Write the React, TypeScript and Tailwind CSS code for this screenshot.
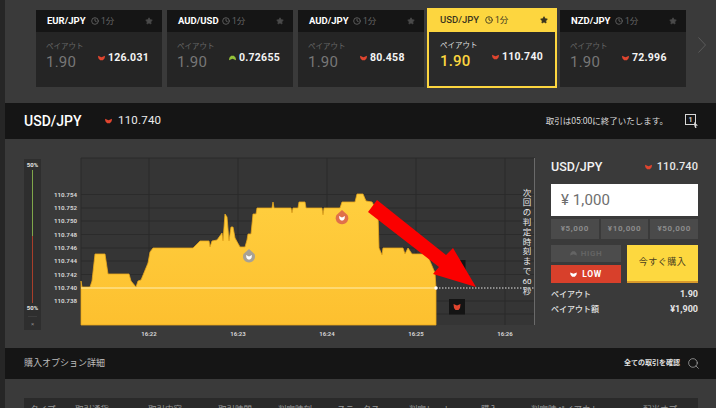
import React from "react";
import { Clock, Star, Search } from "lucide-react";

const FONT = 'Roboto, "Noto Sans CJK JP", sans-serif';

function Down({ className = "" }: { className?: string }) {
  return (
    <svg viewBox="0 0 8 6" className={className} fill="#e0452f">
      <path d="M0 .5 L4 2.2 L8 .5 L7.6 3.4 L5.6 5.6 L2.4 5.6 L.4 3.4 Z" />
    </svg>
  );
}
function Up({ className = "" }: { className?: string }) {
  return (
    <svg viewBox="0 0 8 6" className={className} fill="#94c23a">
      <path d="M0 5.5 L4 3.8 L8 5.5 L7.6 2.6 L5.6 .4 L2.4 .4 L.4 2.6 Z" />
    </svg>
  );
}

const cards = [
  { pair: "EUR/JPY", price: "126.031", up: false },
  { pair: "AUD/USD", price: "0.72655", up: true },
  { pair: "AUD/JPY", price: "80.458", up: false },
  { pair: "USD/JPY", price: "110.740", up: false, active: true },
  { pair: "NZD/JPY", price: "72.996", up: false },
];

function Card({ pair, price, up, active }: { pair: string; price: string; up: boolean; active?: boolean }) {
  return (
    <div
      className={
        active
          ? "-mx-[2px] -mt-[2px] flex h-[80px] w-[130px] shrink-0 flex-col bg-[#fdd63f]"
          : "flex h-[77px] w-[126px] shrink-0 flex-col bg-[#252525]"
      }
    >
      <div
        className={
          active
            ? "flex h-[24px] shrink-0 items-center pl-[13px] pr-[9px] text-[#3a3520]"
            : "flex h-[22px] shrink-0 items-center bg-[#151515] pl-[11px] pr-[9px] text-white"
        }
      >
        <span className={active ? "w-[45px] text-[9.5px] font-medium" : "w-[44px] text-[9.5px] font-bold"}>{pair}</span>
        <Clock className={active ? "size-[8px] text-[#3a3520]" : "size-[8px] text-[#666]"} strokeWidth={2.5} />
        <span className={active ? "ml-[2px] text-[8.5px]" : "ml-[2px] text-[8.5px] text-[#666]"}>1分</span>
        <Star
          className={active ? "ml-auto size-[8px] text-[#3a3520]" : "ml-auto size-[8px] text-[#4a4a4a]"}
          fill="currentColor"
        />
      </div>
      <div
        className={
          active
            ? "mx-[2px] mb-[2px] flex flex-1 bg-[#2a2a2a] pl-[11px] pt-[8px]"
            : "flex flex-1 pl-[10px] pt-[9px]"
        }
      >
        <div className="flex w-[52px] shrink-0 flex-col">
          <span
            className={
              active
                ? "whitespace-nowrap text-[7.5px] leading-[11px] text-[#ddd]"
                : "whitespace-nowrap text-[7.5px] leading-[11px] text-[#666]"
            }
          >
            ペイアウト
          </span>
          <span
            className={
              active
                ? "mt-[1px] text-[15px] font-medium leading-[18px] tracking-[.2px] text-[#fdd63f]"
                : "mt-[1px] text-[15px] leading-[18px] tracking-[.2px] text-[#777]"
            }
          >
            1.90
          </span>
        </div>
        <div className="flex h-[26px] items-center gap-[3px] self-start pt-[8px]">
          {up ? <Up className="h-[6px] w-[7px]" /> : <Down className="h-[6px] w-[7px]" />}
          <span className="text-[10.5px] font-bold tracking-[.25px] text-[#f4f4f4]">{price}</span>
        </div>
      </div>
    </div>
  );
}

const area =
  "81,325 81,281 82,287 90,287 92,281 95,254 105,254 108,274 129,274 131,281 136,287 138,281 141,280 148,263 150,252 153,248 193,248 200,241 209,241 210,247 212,241 217,240 222,233 223,241 225,214 227,217 229,241 231,227 233,227 235,238 240,247 245,247 247,240 248,234 251,234 253,214 256,214 257,208 272,208 273,202 274,208 291,208 292,213 293,208 298,208 299,202 305,202 306,208 322,208 323,215 324,208 340,208 342,202 355,202 357,194 363,194 366,201 372,202 378,213 379,248 382,255 383,248 403,248 405,254 408,248 412,254 427,254 435,273 436,288 436,325";

const ys = [
  ["110.754", 194.5],
  ["110.752", 208],
  ["110.750", 221],
  ["110.748", 234.5],
  ["110.746", 248],
  ["110.744", 261],
  ["110.742", 274.5],
  ["110.740", 288],
  ["110.738", 301],
] as const;

const xs = [
  ["16:22", 149],
  ["16:23", 238],
  ["16:24", 327],
  ["16:25", 416],
  ["16:26", 505],
] as const;

const vert = ["次", "回", "の", "判", "定", "時", "刻", "ま", "で", "60", "秒"];

function Chart() {
  return (
    <svg viewBox="41 150 504 190" className="h-[190px] w-[504px] shrink-0" style={{ fontFamily: FONT }}>
      <defs>
        <linearGradient id="fill" x1="0" y1="0" x2="0" y2="1">
          <stop offset="0" stopColor="#ffcf3f" />
          <stop offset="1" stopColor="#fdc02f" />
        </linearGradient>
      </defs>
      <rect x="81" y="158" width="454" height="167" fill="#353535" />
      {[158, ...ys.map((v) => v[1]), 314].map((y) => (
        <line key={y} x1="81" x2="535" y1={y} y2={y} stroke="#2b2b2b" strokeWidth="1" />
      ))}
      {[81, ...xs.map((v) => v[1])].map((x) => (
        <line key={x} x1={x} x2={x} y1="158" y2="325" stroke="#2b2b2b" strokeWidth="1" />
      ))}
      <line x1="534.5" x2="534.5" y1="158" y2="325" stroke="#6a6a6a" strokeWidth="1" />
      {ys.map(([t, y]) => (
        <text key={t} x="77" y={y + 2.3} textAnchor="end" fontSize="6.2" fontWeight="700" fill="#d4d4d4">
          {t}
        </text>
      ))}
      {xs.map(([t, x]) => (
        <text key={t} x={x} y="336" textAnchor="middle" fontSize="6" fontWeight="700" fill="#d4d4d4">
          {t}
        </text>
      ))}
      <polygon points={area} fill="url(#fill)" stroke="#e9a71c" strokeWidth=".8" />
      <line x1="81" x2="436" y1="288" y2="288" stroke="#ffeeb0" strokeWidth="1" />
      <line x1="436" x2="535" y1="288" y2="288" stroke="#ededed" strokeWidth="1" strokeDasharray="1.5 1.5" />
      <circle cx="436" cy="288" r="1.7" fill="#fff" />

      <path d="M249 249 L254.5 254 A6 6 0 1 1 243.5 254 Z" fill="#a8a194" />
      <path d="M246 255 L249 256.5 L252 255 L251.5 258 L250 259.5 L248 259.5 L246.5 258 Z" fill="#fff" />
      <path d="M342 210 L347.5 215 A6.3 6.3 0 1 1 336.5 215 Z" fill="#e0704a" />
      <path d="M339 216 L342 217.5 L345 216 L344.5 219 L343 220.5 L341 220.5 L339.5 219 Z" fill="#fff" />

      <rect x="458" y="260" width="7.5" height="12" fill="#141414" />
      <rect x="449" y="299" width="16" height="15.5" fill="#141414" />
      <path d="M453.5 304 L457 305.5 L460.5 304 L460 308 L458.5 310 L455.5 310 L454 308 Z" fill="#e0452f" />

      <polygon points="377,200 446,255 453,248 476,287 433,274 439,267 368,212" fill="#fb0000" />

      {vert.map((c, i) => (
        <text
          key={i}
          x="527"
          y={195.5 + i * 9.8}
          textAnchor="middle"
          fontSize={c === "60" ? 8 : 8.5}
          fill="#ececec"
        >
          {c}
        </text>
      ))}
    </svg>
  );
}

function Gauge() {
  return (
    <div className="mt-[20px] flex h-[171px] w-[17px] shrink-0 flex-col items-center bg-[#2e2e2e] pt-[2px]">
      <span className="text-[6px] font-bold leading-[8px] text-[#e4e4e4]">50%</span>
      <div className="mt-[1px] h-[66px] w-[1px] bg-[#7fa64a]" />
      <div className="h-[67px] w-[1px] bg-[#a83e2a]" />
      <span className="mt-[1px] text-[6px] font-bold leading-[8px] text-[#e4e4e4]">50%</span>
      <div className="mt-[4px] h-[1px] w-[9px] bg-[#3c3c3c]" />
      <span className="mt-[1px] text-[6px] leading-[12px] text-[#888]">×</span>
    </div>
  );
}

function Panel() {
  return (
    <div className="ml-[6px] flex w-[147px] shrink-0 flex-col pt-[18px]">
      <div className="flex h-[20px] items-center">
        <span className="text-[12.5px] font-medium text-[#f2f2f2]">USD/JPY</span>
        <Down className="ml-auto h-[6px] w-[7px]" />
        <span className="ml-[5px] text-[11px] font-medium tracking-[.1px] text-[#e8e8e8]">110.740</span>
      </div>
      <div className="mt-[7px] flex h-[32px] items-center bg-white pl-[10px] pt-[1px] text-[15px] tracking-[.1px] text-[#6e6e6e]">
        ¥ 1,000
      </div>
      <div className="mt-[3px] flex gap-[2px]">
        {["¥5,000", "¥10,000", "¥50,000"].map((t) => (
          <div
            key={t}
            className="flex h-[20px] flex-1 items-center justify-center bg-[#4a4a4a] text-[8px] font-bold tracking-[.6px] text-[#8c8c8c]"
          >
            {t}
          </div>
        ))}
      </div>
      <div className="mt-[6px] flex gap-[6px]">
        <div className="flex w-[70px] flex-col gap-[3px]">
          <div className="flex h-[17px] items-center justify-center gap-[4px] bg-[#4c4c4c] text-[8px] font-bold tracking-[.6px] text-[#646464]">
            <svg viewBox="0 0 8 6" className="h-[5px] w-[7px]" fill="#646464">
              <path d="M0 5.5 L4 3.8 L8 5.5 L7.6 2.6 L5.6 .4 L2.4 .4 L.4 2.6 Z" />
            </svg>
            HIGH
          </div>
          <div className="flex h-[18px] items-center justify-center gap-[5px] bg-[#d8402b] text-[8.5px] font-bold tracking-[.6px] text-white">
            <svg viewBox="0 0 8 6" className="h-[5px] w-[7px]" fill="#fff">
              <path d="M0 .5 L4 2.2 L8 .5 L7.6 3.4 L5.6 5.6 L2.4 5.6 L.4 3.4 Z" />
            </svg>
            LOW
          </div>
        </div>
        <div className="flex h-[38px] flex-1 items-center justify-center border-b-2 border-[#d99a2b] bg-[#fdd83f] text-[9px] tracking-[.5px] text-[#4a4020]">
          今すぐ購入
        </div>
      </div>
      <div className="mt-[5px] flex h-[14px] items-center justify-between text-[8px] font-medium text-[#e4e4e4]">
        <span>ペイアウト</span>
        <span className="text-[9px] font-bold">1.90</span>
      </div>
      <div className="flex h-[15px] items-center justify-between text-[8px] font-medium text-[#e4e4e4]">
        <span>ペイアウト額</span>
        <span className="text-[9px] font-bold">¥1,900</span>
      </div>
    </div>
  );
}

const columns: [string, string][] = [
  ["タイプ", "w-[45px]"],
  ["取引通貨", "w-[73px]"],
  ["取引内容", "w-[70px]"],
  ["取引時間", "w-[60px]"],
  ["判定時刻", "w-[59px]"],
  ["ステータス", "w-[72px]"],
  ["判定レート", "w-[72px]"],
  ["購入", "w-[50px]"],
  ["判定時ペイアウト", "w-[112px]"],
  ["配当オプ", "w-[40px]"],
];

export default function App() {
  return (
    <div className="flex h-[408px] w-[716px] overflow-hidden bg-[#3a3a3a]" style={{ fontFamily: FONT }}>
      <div className="w-[5px] shrink-0 bg-[#262626]" />
      <div className="flex min-w-0 flex-1 flex-col">
        <div className="relative flex h-[98px] shrink-0 items-start gap-[5px] pl-[31px] pt-[10px]">
          {cards.map((c) => (
            <Card key={c.pair} {...c} />
          ))}
          <svg viewBox="0 0 8 16" className="absolute left-[693px] top-[37px] h-[16px] w-[8px]" fill="none" stroke="#5a5a5a">
            <path d="M.5 .5 L7.5 8 L.5 15.5" />
          </svg>
        </div>
        <div className="mt-[5px] flex h-[36px] shrink-0 items-center bg-[#151515] pl-[19px] pr-[18px]">
          <span className="w-[81px] text-[14px] font-medium text-white">USD/JPY</span>
          <Down className="h-[6px] w-[7px]" />
          <span className="ml-[6px] text-[11.5px] tracking-[.2px] text-[#ececec]">110.740</span>
          <span className="ml-auto text-[8.5px] text-[#dcdcdc]">取引は05:00に終了いたします。</span>
          <svg viewBox="0 0 13 14" className="ml-[17px] h-[14px] w-[13px]">
            <rect x=".5" y=".5" width="10" height="10" fill="none" stroke="#d8d8d8" />
            <text x="5.5" y="8" textAnchor="middle" fontSize="7" fontWeight="700" fill="#d8d8d8">
              1
            </text>
            <path d="M9 8 L13 11.5 L11 11.7 L11.5 14 L10.2 14 L9.4 12 Z" fill="#d8d8d8" />
          </svg>
        </div>
        <div className="flex h-[209px] shrink-0 items-start pl-[19px]">
          <Gauge />
          <div className="mt-[11px]">
            <Chart />
          </div>
          <Panel />
        </div>
        <div className="flex h-[31px] shrink-0 items-center bg-[#151515] pl-[19px] pr-[16px]">
          <span className="text-[9px] text-[#bdbdbd]">購入オプション詳細</span>
          <span className="ml-auto text-[7px] font-bold text-[#e0e0e0]">全ての取引を確認</span>
          <Search className="ml-[7px] size-[13px] text-[#bdbdbd]" strokeWidth={1.2} />
        </div>
        <div className="ml-[19px] mr-[18px] mt-[19px] flex h-[30px] shrink-0 items-start bg-[#2a2a2a] pl-[6px] pt-[5px] text-[8.5px] text-[#9a9a9a]">
          {columns.map(([t, w]) => (
            <span key={t} className={`${w} shrink-0 whitespace-nowrap`}>
              {t}
            </span>
          ))}
        </div>
      </div>
    </div>
  );
}
